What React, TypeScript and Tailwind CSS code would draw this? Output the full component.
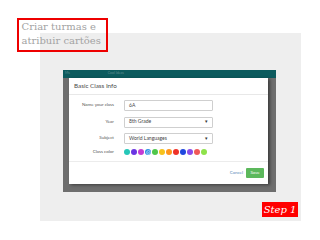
import React from "react";

const colors = [
  "#25c7b8",
  "#6a35e2",
  "#c43bd3",
  "#2b8fe3",
  "#4fc64a",
  "#f6c21c",
  "#ff951c",
  "#ef3228",
  "#1f47de",
  "#8b4ce8",
  "#f05858",
  "#8ee24a",
];

function Row({ label, value, select }: { label: string; value: string; select?: boolean }) {
  return (
    <div className="flex items-center h-[11px]">
      <div className="w-[45px] text-right text-[4.5px] text-[#555]">{label}</div>
      <div className="ml-[10px] w-[89px] h-[11px] border-[0.5px] border-[#cfcfcf] rounded-[1px] flex items-center justify-between px-[4px] text-[5px] text-[#444]">
        <span>{value}</span>
        {select && <span className="text-[5px] text-[#333]">▾</span>}
      </div>
    </div>
  );
}

export default function App() {
  return (
    <div className="w-[320px] h-[240px] bg-white relative overflow-hidden" style={{ fontFamily: "Lato, 'Liberation Sans', sans-serif" }}>
      <div className="pt-[33px] pl-[40px]">
        <div className="w-[261px] h-[188px] bg-[#eeeeee] pt-[37px] pl-[23px] flex flex-col">
          <div className="w-[213px] h-[122px] flex flex-col">
            <div className="h-[8px] bg-[#0c5b5e] flex items-center text-[3.5px] text-[#5d8c8e]">
              <span className="ml-[2px]">Ms</span>
              <span className="ml-[38px]">Cool Ideas</span>
            </div>
            <div className="flex-1 bg-[#6e6e6e] pl-[6px] pr-[8px] pb-[8px]">
              <div className="w-[199px] h-[106px] bg-white shadow-[2px_1px_3px_rgba(0,0,0,0.45)] flex flex-col">
                <div className="h-[17px] border-b border-[#e8e8e8] px-[5px] flex items-center text-[6.3px] text-[#4a4a4a]">
                  Basic Class Info
                </div>
                <div className="pt-[5px] flex flex-col gap-[5.5px]">
                  <Row label="Name your class" value="6A" />
                  <Row label="Year" value="8th Grade" select />
                  <Row label="Subject" value="World Languages" select />
                </div>
                <div className="flex items-center mt-[5px] h-[6px]">
                  <div className="w-[45px] text-right text-[4.5px] text-[#555]">Class color</div>
                  <div className="ml-[10px] flex gap-[1px]">
                    {colors.map((c, i) => (
                      <div
                        key={i}
                        className="w-[6px] h-[6px] rounded-full flex items-center justify-center"
                        style={{ backgroundColor: c }}
                      >
                        {i === 3 && (
                          <svg width="5" height="5" viewBox="0 0 10 10">
                            <circle cx="5" cy="5" r="3.8" fill="none" stroke="white" strokeWidth="1" />
                            <path d="M3.2 5.2 L4.5 6.4 L6.9 3.8" fill="none" stroke="white" strokeWidth="1.1" />
                          </svg>
                        )}
                      </div>
                    ))}
                  </div>
                </div>
                <div className="mt-[6px] border-b border-[#ececec]" />
                <div className="mt-[6px] flex justify-end items-center pr-[4px] gap-[3px]">
                  <span className="text-[4.5px] text-[#5a8ab8]">Cancel</span>
                  <div className="w-[18px] h-[10px] bg-[#5cb85c] rounded-[1px] flex items-center justify-center text-[4.5px] text-white">
                    Save
                  </div>
                </div>
              </div>
            </div>
          </div>
          <div className="mt-[10px] pr-[3px] flex justify-end">
            <div
              className="w-[36px] h-[15px] bg-[#ff0000] text-white italic text-[10px] leading-[15px] flex items-center justify-center"
              style={{ fontFamily: "'DejaVu Serif', serif" }}
            >
              Step 1
            </div>
          </div>
        </div>
      </div>
      <div
        className="absolute left-[17px] top-[18px] w-[91px] h-[34px] border-[2.5px] border-[#ee0000] pl-[2.5px] text-[10px] leading-[14px] text-[#a3a3a3] whitespace-nowrap"
        style={{ fontFamily: "'DejaVu Serif', serif" }}
      >
        Criar turmas e
        <br />
        atribuir cartões
      </div>
    </div>
  );
}
